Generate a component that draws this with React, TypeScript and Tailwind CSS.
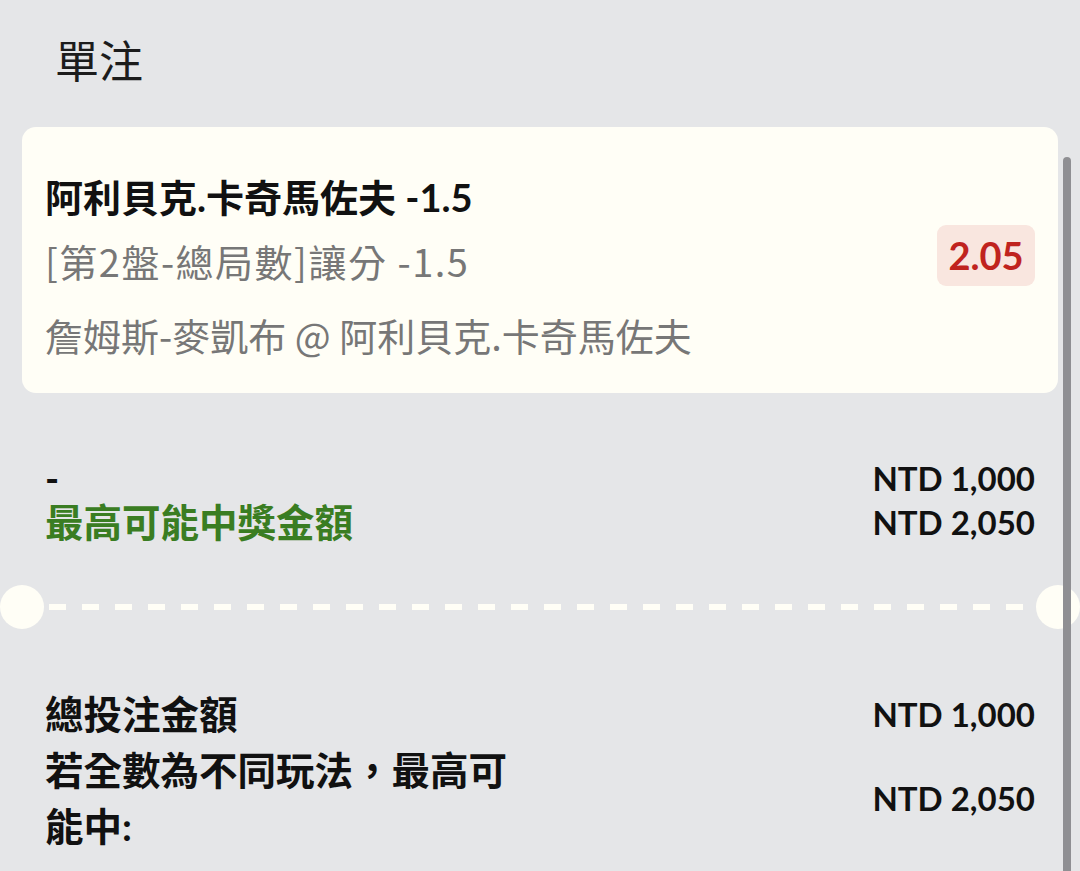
import React from "react";

const FONT = "font-['Lato','Noto_Sans_CJK_TC',sans-serif]";

function Row({ label, value, labelClass }: { label: React.ReactNode; value: string; labelClass: string }) {
  return (
    <div className="flex items-center justify-between">
      <div className={labelClass}>{label}</div>
      <div className="text-[33px] font-bold text-[#111] leading-[44px]">{value}</div>
    </div>
  );
}

export default function App() {
  return (
    <div className={`relative min-h-[871px] w-full overflow-hidden bg-[#e5e6e8] ${FONT}`}>
      <div className="flex h-[122px] items-center pl-[55px] text-[44px] leading-none text-[#1c1c1c]">單注</div>

      {/* selection card */}
      <div className="mx-[22px] mt-[5px] flex h-[266px] items-start justify-between rounded-[14px] bg-[#fffef6] px-[23px]">
        <div className="pt-[38px]">
          <div className="text-[38px] font-bold leading-[64px] text-[#111]">阿利貝克.卡奇馬佐夫 -1.5</div>
          <div className="font-['Noto_Sans_CJK_TC',sans-serif] text-[38px] leading-[64px] tracking-[1.5px] text-[#777]">
            [第2盤-總局數]讓分 -1.5
          </div>
          <div className="mt-[10px] font-['Noto_Sans_CJK_TC',sans-serif] text-[38px] leading-[64px] text-[#777]">
            詹姆斯-麥凱布 @ 阿利貝克.卡奇馬佐夫
          </div>
        </div>
        <div className="mt-[98px] flex h-[61px] w-[98px] items-center justify-center rounded-[9px] bg-[#f9e6df] text-[38px] font-bold text-[#c0231e]">
          2.05
        </div>
      </div>

      {/* stake summary */}
      <div className="mx-[45px] mt-[63px]">
        <Row label="-" value="NTD 1,000" labelClass="text-[38px] font-bold leading-[44px] text-[#111]" />
        <Row
          label="最高可能中獎金額"
          value="NTD 2,050"
          labelClass="text-[38.5px] font-bold leading-[44px] text-[#3a7d22]"
        />
      </div>

      {/* ticket divider */}
      <div className="mt-[41px] flex h-[44px] items-center">
        <div className="h-[44px] w-[44px] shrink-0 rounded-full bg-[#fffef6]" />
        <div className="mx-[5px] h-[6px] flex-1 bg-[repeating-linear-gradient(90deg,#fffef6_0_17px,transparent_17px_33px)]" />
        <div className="h-[44px] w-[44px] shrink-0 rounded-full bg-[#fffef6]" />
      </div>

      {/* totals */}
      <div className="mx-[45px] mt-[57px]">
        <div className="flex items-center justify-between">
          <div className="text-[38.5px] font-bold leading-[56px] text-[#111]">總投注金額</div>
          <div className="text-[33px] font-bold leading-[44px] text-[#111]">NTD 1,000</div>
        </div>
        <div className="flex items-center justify-between">
          <div className="max-w-[490px] text-[38.5px] font-bold leading-[56px] text-[#111]">若全數為不同玩法，最高可能中:</div>
          <div className="text-[33px] font-bold leading-[44px] text-[#111]">NTD 2,050</div>
        </div>
      </div>

      {/* scrollbar */}
      <div className="absolute bottom-[-10px] right-[9px] top-[157px] w-[8px] rounded-full bg-[#8f8f93]" />
    </div>
  );
}
